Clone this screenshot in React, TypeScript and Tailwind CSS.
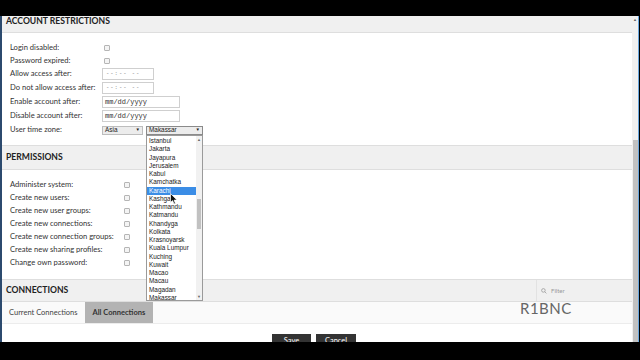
import React from "react";

const zones = [
  "Istanbul","Jakarta","Jayapura","Jerusalem","Kabul","Kamchatka","Karachi","Kashgar","Kathmandu","Katmandu","Khandyga","Kolkata","Krasnoyarsk","Kuala Lumpur","Kuching","Kuwait","Macao","Macau","Magadan","Makassar",
];

function Check() {
  return <div className="w-[6px] h-[6px] border border-[#b5b5b5] bg-[#f4f4f4] rounded-[1px]" />;
}

function Row({ label, h, labelW, children }: { label: string; h: number; labelW: string; children?: React.ReactNode }) {
  return (
    <div className="flex items-center pl-[8px] shrink-0" style={{ height: h }}>
      <div className={`${labelW} text-[7.6px] text-[#333] leading-none`}>{label}</div>
      {children}
    </div>
  );
}

export default function App() {
  return (
    <div className="w-[640px] h-[360px] bg-black flex flex-col overflow-hidden" style={{ fontFamily: "Lato, 'Open Sans', sans-serif" }}>
      <div className="h-[16px] shrink-0" />
      <div className="h-[326px] shrink-0 flex">
        <div className="w-[2px] bg-[#2c4a6e]" />
        <div className="flex-1 bg-white relative overflow-hidden flex flex-col">
          {/* ACCOUNT RESTRICTIONS */}
          <div className="h-[17px] shrink-0 bg-[#f0f0f0] border-b border-[#dedede] pl-[4px] pt-[1px]">
            <div className="text-[8.6px] font-bold text-[#222] leading-[9px]">ACCOUNT RESTRICTIONS</div>
          </div>
          <div className="h-[8px] shrink-0" />
          <Row label="Login disabled:" h={13} labelW="w-[94px]"><Check /></Row>
          <Row label="Password expired:" h={13} labelW="w-[94px]"><Check /></Row>
          <Row label="Allow access after:" h={14} labelW="w-[92px]">
            <div className="w-[52px] h-[12px] border border-[#cfcfcf] flex items-center pl-[3px] text-[5.5px] text-[#777] tracking-[1px]" style={{ fontFamily: "'Liberation Mono', monospace" }}>--:-- --</div>
          </Row>
          <Row label="Do not allow access after:" h={14} labelW="w-[92px]">
            <div className="w-[52px] h-[12px] border border-[#cfcfcf] flex items-center pl-[3px] text-[5.5px] text-[#777] tracking-[1px]" style={{ fontFamily: "'Liberation Mono', monospace" }}>--:-- --</div>
          </Row>
          <Row label="Enable account after:" h={14} labelW="w-[92px]">
            <div className="w-[78px] h-[12px] border border-[#cfcfcf] flex items-center pl-[2px] text-[7px] text-[#333]" style={{ fontFamily: "'Liberation Mono', monospace" }}>mm/dd/yyyy</div>
          </Row>
          <Row label="Disable account after:" h={14} labelW="w-[92px]">
            <div className="w-[78px] h-[12px] border border-[#cfcfcf] flex items-center pl-[2px] text-[7px] text-[#333]" style={{ fontFamily: "'Liberation Mono', monospace" }}>mm/dd/yyyy</div>
          </Row>
          <Row label="User time zone:" h={14} labelW="w-[92px]">
            <div className="flex gap-[3px]" style={{ fontFamily: "'Liberation Sans', Arial, sans-serif" }}>
              <div className="w-[41px] h-[9px] border border-[#bdbdbd] bg-[#ececec] flex items-center justify-between px-[2px] text-[6.4px] text-[#222]">
                <span>Asia</span><span className="text-[4.5px]">▼</span>
              </div>
              <div className="w-[57px] h-[9px] border border-[#8a8a8a] bg-[#ececec] flex items-center justify-between px-[2px] text-[6.4px] text-[#222]">
                <span>Makassar</span><span className="text-[4.5px]">▼</span>
              </div>
            </div>
          </Row>
          <div className="h-[8px] shrink-0" />
          {/* PERMISSIONS */}
          <div className="h-[25px] shrink-0 bg-[#f0f0f0] border-y border-[#dedede] pl-[4px] flex items-center">
            <div className="text-[8.6px] font-bold text-[#222] leading-none">PERMISSIONS</div>
          </div>
          <div className="h-[8px] shrink-0" />
          {["Administer system:","Create new users:","Create new user groups:","Create new connections:","Create new connection groups:","Create new sharing profiles:","Change own password:"].map((l) => (
            <Row key={l} label={l} h={13} labelW="w-[114px]"><Check /></Row>
          ))}
          <div className="h-[10px] shrink-0" />
          {/* CONNECTIONS */}
          <div className="h-[23px] shrink-0 bg-[#f0f0f0] border-y border-[#dedede] pl-[4px] flex items-center">
            <div className="text-[8.6px] font-bold text-[#222] leading-none">CONNECTIONS</div>
            <div className="ml-auto w-[96px] h-full border-l border-[#e2e2e2] flex items-center pl-[4px] gap-[4px]">
              <svg width="6" height="6" viewBox="0 0 10 10" fill="none" stroke="#999" strokeWidth="1.3"><circle cx="4" cy="4" r="3" /><path d="M6.2 6.2 9 9" /></svg>
              <span className="text-[6px] text-[#999]">Filter</span>
            </div>
          </div>
          <div className="h-[22px] shrink-0 bg-[#fafafa] border-b border-[#ececec] flex items-stretch">
            <div className="px-[7px] flex items-center text-[7.5px] text-[#444]">Current Connections</div>
            <div className="px-[8px] flex items-center text-[7.5px] font-bold text-[#333] bg-[#b3b3b3]">All Connections</div>
          </div>
          <div className="h-[10px] shrink-0" />
          <div className="flex justify-center gap-[5px] pr-[6px] shrink-0">
            <div className="w-[39px] h-[20px] bg-[#333] text-white text-[7.5px] leading-none flex justify-center pt-[3px]">Save</div>
            <div className="w-[40px] h-[20px] bg-[#333] text-white text-[7.5px] leading-none flex justify-center pt-[3px]">Cancel</div>
          </div>

          {/* Watermark */}
          <div className="absolute left-[518px] top-[285px] text-[15px] leading-none text-[#666] tracking-[0.5px]">R1BNC</div>

          {/* Open select dropdown */}
          <div className="absolute left-[144px] top-[119px] w-[57px] h-[166px] bg-white border border-[#9a9a9a] flex" style={{ fontFamily: "'Liberation Sans', Arial, sans-serif" }}>
            <div className="flex-1 pt-[1px]">
              {zones.map((z) => (
                <div key={z} className={`h-[8.25px] pl-[2px] text-[6.4px] leading-[8.25px] ${z === "Karachi" ? "bg-[#3b8de6] text-white" : "text-[#222]"}`}>{z}</div>
              ))}
            </div>
            <div className="w-[6px] bg-[#f1f1f1] flex flex-col items-center">
              <div className="text-[4px] text-[#666] leading-[7px]">▲</div>
              <div className="h-[56px]" />
              <div className="w-[4px] h-[30px] bg-[#c1c1c1]" />
              <div className="flex-1" />
              <div className="text-[4px] text-[#666] leading-[7px]">▼</div>
            </div>
          </div>

          {/* mouse cursor */}
          <svg className="absolute left-[168px] top-[177px]" width="8" height="12" viewBox="0 0 8 12">
            <path d="M0.5 0.5 L0.5 9.5 L2.6 7.6 L4 11 L5.4 10.4 L4.1 7.1 L7 7.1 Z" fill="#111" stroke="#fff" strokeWidth="0.7" />
          </svg>
        </div>
        <div className="w-[6px] bg-[#f0f0f0] flex flex-col items-center">
          <div className="text-[4px] text-[#666] leading-[8px]">▲</div>
          <div className="h-[116px]" />
          <div className="w-[5px] flex-1 bg-[#c1c1c1]" />
        </div>
        <div className="w-[1px] bg-[#6aa6dd]" />
        <div className="w-[1px] bg-black" />
      </div>
      <div className="flex-1" />
    </div>
  );
}
